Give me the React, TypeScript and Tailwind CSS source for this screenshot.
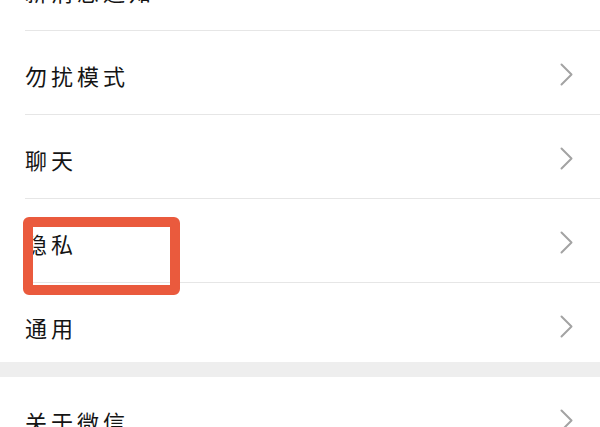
import React from "react";

const Chevron = ({ hidden = false }: { hidden?: boolean }) => (
  <svg width="13" height="23" viewBox="0 0 13 23" className={`shrink-0 ${hidden ? "invisible" : ""}`}>
    <polyline points="1.5,1.5 11.5,11.5 1.5,21.5" fill="none" stroke="#a3a3a3" strokeWidth="2" strokeLinecap="round" strokeLinejoin="round" />
  </svg>
);

const Row = ({
  label,
  last = false,
  hideChevron = false,
  className = "",
}: {
  label: string;
  last?: boolean;
  hideChevron?: boolean;
  className?: string;
}) => (
  <div className="pl-[25px] bg-white">
    <div
      className={`flex items-center justify-between pr-[27px] box-border ${last ? "" : "border-b border-[#e6e6e6]"} ${className}`}
    >
      <span className="text-[22px] leading-none tracking-[4px] text-[#141414]">{label}</span>
      <Chevron hidden={hideChevron} />
    </div>
  </div>
);

export default function App() {
  return (
    <div
      className="relative w-[600px] h-[427px] overflow-hidden bg-white"
      style={{ fontFamily: '"Noto Sans CJK SC", "Noto Sans", sans-serif' }}
    >
      <div className="-mt-[53px] flex flex-col">
        <Row label="新消息通知" hideChevron className="h-[84px] pt-1" />
        <Row label="勿扰模式" className="h-[84px] pt-1" />
        <Row label="聊天" className="h-[84px] pt-1" />
        <Row label="隐私" className="h-[84px] pt-1" />
        <Row label="通用" last className="h-[79px] pt-[8px]" />
        <div className="h-[15px] bg-[#eeeeee]" />
        <Row label="关于微信" className="h-[84px] pt-1" />
      </div>
      <div className="absolute left-[23px] top-[217px] w-[157px] h-[78px] border-[10px] border-[#ea5a3d] rounded-[6px]" />
    </div>
  );
}
